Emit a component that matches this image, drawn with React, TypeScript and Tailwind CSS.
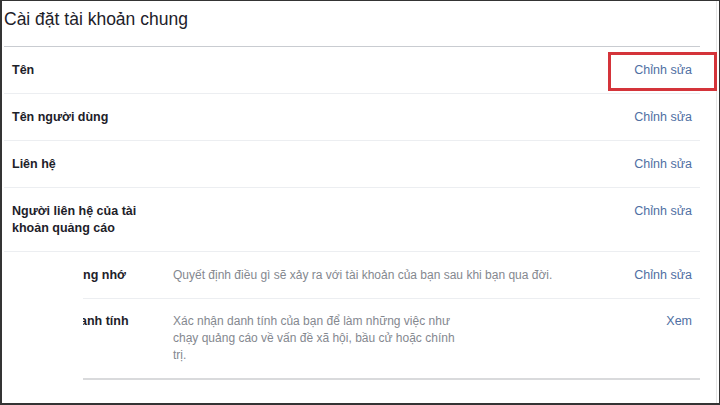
const rows = [
  { label: "Tên", action: "Chỉnh sửa" },
  { label: "Tên người dùng", action: "Chỉnh sửa" },
  { label: "Liên hệ", action: "Chỉnh sửa" },
  { label: "Người liên hệ của tài khoản quảng cáo", action: "Chỉnh sửa" },
];

export default function App() {
  return (
    <div className="relative h-[405px] w-[720px] overflow-hidden border-b-2 border-l-2 border-r border-t border-[#343434] bg-white font-['Liberation_Sans',Arial,sans-serif] text-[#1d2129]">
      <div className="h-full w-[715px] border-r border-[#e6e6e6] pl-[2px]">
        <div className="w-[696px]">
          <h1 className="h-[45px] pt-[8px] text-[17.5px] leading-[20px]">
            Cài đặt tài khoản chung
          </h1>
          <div className="border-t border-[#c9ccd1]">
            {rows.map((row) => (
              <div
                key={row.label}
                className="flex border-b border-[#eceef1] px-2 py-[14.5px] text-[12.5px] leading-[17px]"
              >
                <div className="w-[136px] font-bold">{row.label}</div>
                <div className="flex-1" />
                <a className="text-[#4f6fa3]">{row.action}</a>
              </div>
            ))}
            <div className="ml-[79px] flex border-b border-[#eceef1] py-[14.5px] pr-2 text-[12.5px] leading-[17px]">
              <div className="w-[90px] overflow-hidden whitespace-nowrap font-bold">
                ng nhớ
              </div>
              <div className="flex-1 text-[12px] text-[#84888f]">
                Quyết định điều gì sẽ xảy ra với tài khoản của bạn sau khi bạn
                qua đời.
              </div>
              <a className="text-[#4f6fa3]">Chỉnh sửa</a>
            </div>
            <div className="ml-[79px] flex border-b-2 border-[#d9dadc] py-[14px] pr-2 text-[12.5px] leading-[17px]">
              <div className="w-[90px] overflow-hidden whitespace-nowrap font-bold">
                <span className="-ml-[3px]">anh tính</span>
              </div>
              <div className="flex-1 text-[12px] text-[#84888f]">
                Xác nhận danh tính của bạn để làm những việc như
                <br />
                chạy quảng cáo về vấn đề xã hội, bầu cử hoặc chính
                <br />
                trị.
              </div>
              <a className="text-[#4f6fa3]">Xem</a>
            </div>
          </div>
        </div>
      </div>
      <div className="absolute left-[606px] top-[51px] h-[39px] w-[109px] border-[3px] border-[#d4343a]" />
    </div>
  );
}
